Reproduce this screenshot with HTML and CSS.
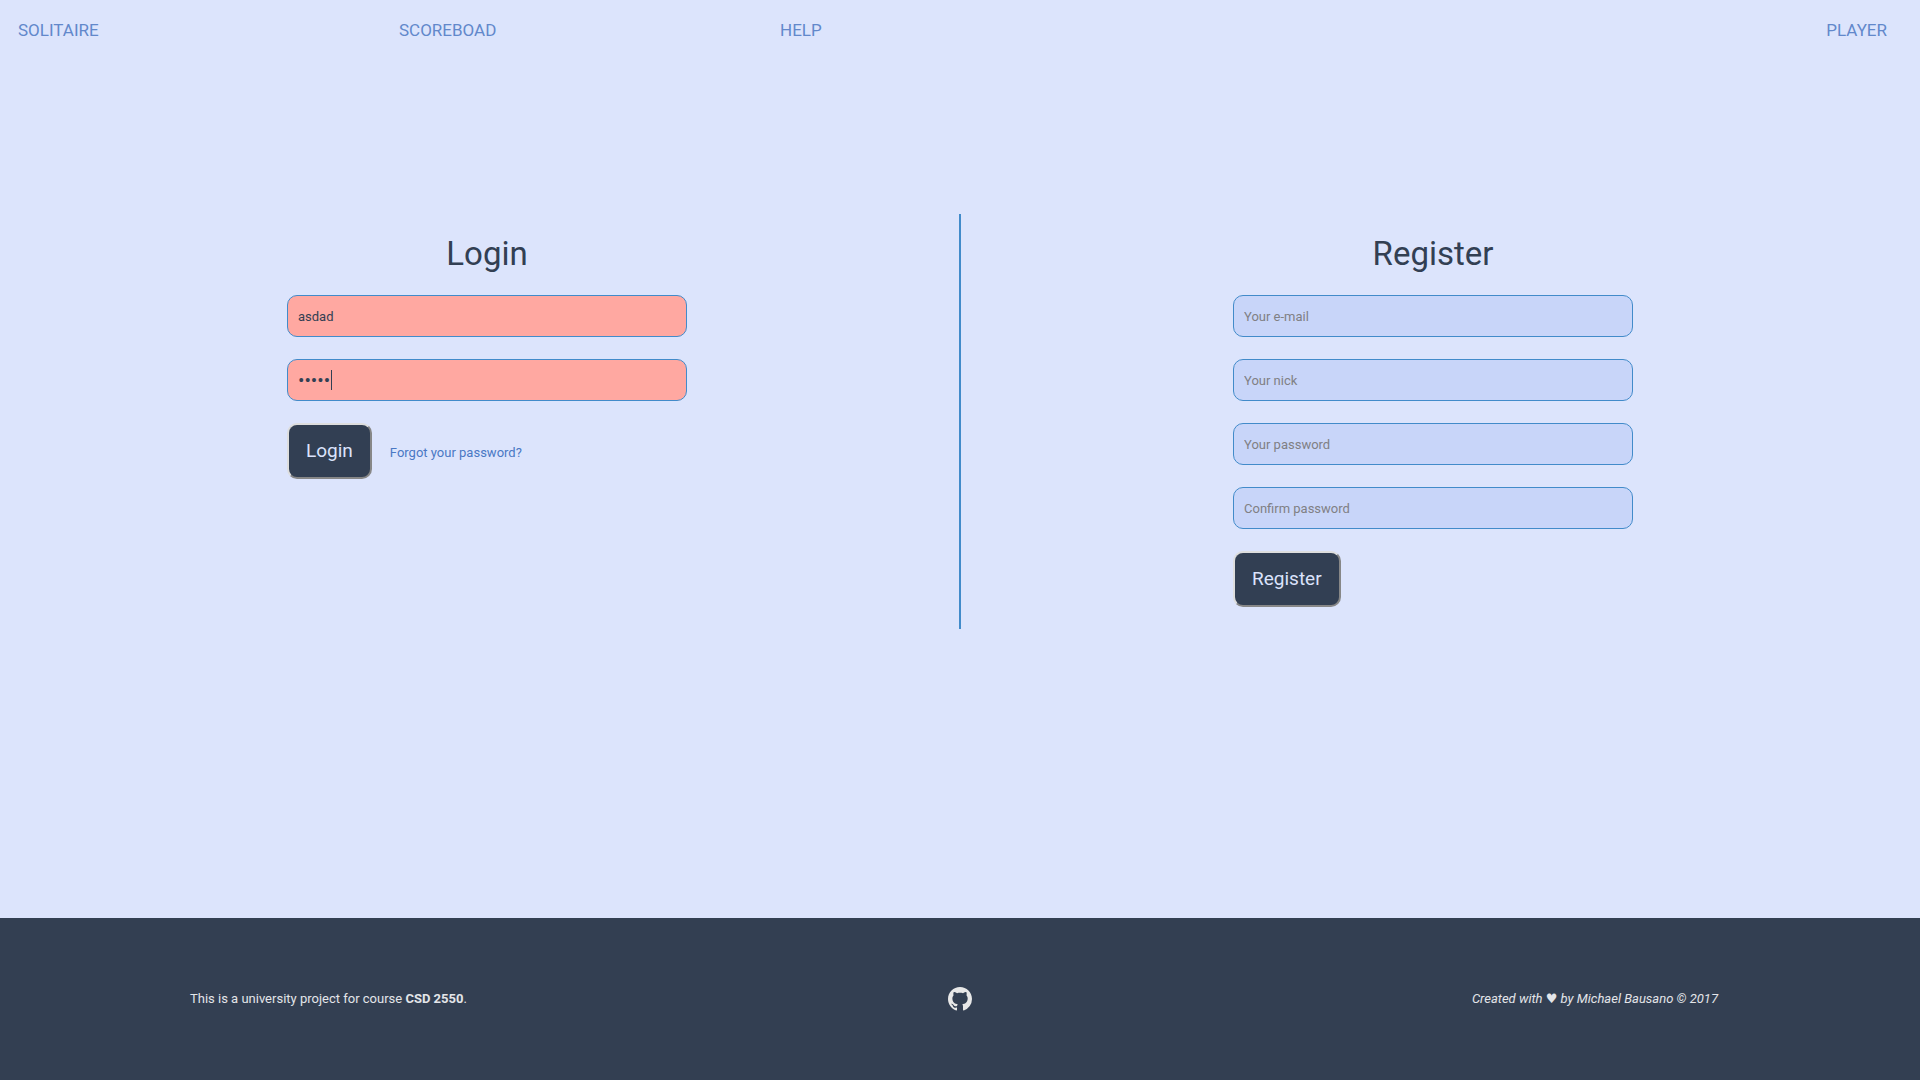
FILE: index.html
```html
<!DOCTYPE html>
<html lang="en">
<head>
<meta charset="utf-8">
<meta name="viewport" content="width=device-width, initial-scale=1">
<title>Solitaire</title>
<link rel="stylesheet" href="styles.css">
</head>
<body>
<nav class="nav">
  <a class="nav-link" href="#">SOLITAIRE</a>
  <a class="nav-link" href="#">SCOREBOAD</a>
  <a class="nav-link" href="#">HELP</a>
  <a class="nav-link nav-player" href="#">PLAYER</a>
</nav>
<main class="main">
  <form class="form">
    <h1 class="title">Login</h1>
    <input class="field invalid" type="text" aria-label="Your nick" value="asdad">
    <div class="secret">
      <input class="field invalid masked" type="password" aria-label="Your password" value="asdad">
      <span class="caret"></span>
    </div>
    <div class="actions">
      <button class="button" type="button">Login</button>
      <a class="forgot" href="#">Forgot your password?</a>
    </div>
  </form>
  <div class="divider"></div>
  <form class="form">
    <h1 class="title">Register</h1>
    <input class="field" type="email" aria-label="Your e-mail" placeholder="Your e-mail">
    <input class="field" type="text" aria-label="Your nick" placeholder="Your nick">
    <input class="field" type="password" aria-label="Your password" placeholder="Your password">
    <input class="field" type="password" aria-label="Confirm password" placeholder="Confirm password">
    <div class="actions">
      <button class="button" type="button">Register</button>
    </div>
  </form>
</main>
<footer class="footer">
  <p class="note">This is a university project for course <b>CSD 2550</b>.</p>
  <a class="github" href="#" aria-label="GitHub"><svg viewBox="0 0 16 16" width="24" height="24"><path fill="currentColor" d="M8 0C3.58 0 0 3.58 0 8c0 3.54 2.29 6.53 5.47 7.59.4.07.55-.17.55-.38 0-.19-.01-.82-.01-1.49-2.01.37-2.53-.49-2.69-.94-.09-.23-.48-.94-.82-1.13-.28-.15-.68-.52-.01-.53.63-.01 1.08.58 1.23.82.72 1.21 1.87.87 2.33.66.07-.52.28-.87.51-1.07-1.78-.2-3.64-.89-3.64-3.95 0-.87.31-1.59.82-2.15-.08-.2-.36-1.02.08-2.12 0 0 .67-.21 2.2.82.64-.18 1.32-.27 2-.27s1.36.09 2 .27c1.53-1.04 2.2-.82 2.2-.82.44 1.1.16 1.92.08 2.12.51.56.82 1.27.82 2.15 0 3.07-1.87 3.75-3.65 3.95.29.25.54.73.54 1.48 0 1.07-.01 1.93-.01 2.2 0 .21.15.46.55.38A8.01 8.01 0 0 0 16 8c0-4.42-3.58-8-8-8z"/></svg></a>
  <p class="note credit">Created with ♥ by Michael Bausano © 2017</p>
</footer>
</body>
</html>
```
FILE: styles.css
```css
* { box-sizing: border-box; }

body {
  margin: 0;
  min-height: 100vh;
  display: flex;
  flex-direction: column;
  background: #dce4fc;
  color: #323f53;
  font: 13px/20px Roboto, "DejaVu Sans", sans-serif;
}

a { text-decoration: none; }

.nav {
  display: flex;
  padding: 20px 15px 20px 0;
  font-size: 17px;
}

.nav-link {
  flex: 0 0 20%;
  padding: 0 18px;
  color: #6288cb;
}

.nav-player {
  margin-left: auto;
  text-align: right;
}

.main {
  flex: 1;
  display: grid;
  grid-template-columns: 1fr 2px 1fr;
  align-items: start;
  padding: 154px 15px 80px;
}

.divider {
  height: 415px;
  background: #428bca;
}

.form {
  width: 400px;
  max-width: 100%;
  margin: 0 auto;
  padding-top: 16px;
  display: flex;
  flex-direction: column;
  gap: 22px;
}

.title {
  margin: 0 0 -5px;
  font-size: 33px;
  line-height: 48px;
  font-weight: 400;
  text-align: center;
}

.field {
  display: block;
  width: 100%;
  height: 42px;
  padding: 0 10px;
  border: 1px solid #428bca;
  border-radius: 10px;
  background: #c8d5f9;
  color: #323f53;
  font: inherit;
  outline: none;
}

.field::placeholder { color: #808084; opacity: 1; }

.invalid { background: #ffa8a1; }

.masked { font-size: 19px; }

.secret { position: relative; }

.caret {
  position: absolute;
  left: 44px;
  top: 11px;
  width: 1px;
  height: 20px;
  background: #323f53;
}

.actions {
  display: flex;
  align-items: baseline;
  gap: 18px;
}

.button {
  height: 56px;
  padding: 0 17px;
  border: 2px solid;
  border-color: #dedede #878787 #878787 #dedede;
  border-radius: 10px;
  background: #323f53;
  color: #dbe3fc;
  font: 400 19px/28px Roboto, sans-serif;
}

.forgot { color: #4a78c4; }

.footer {
  display: grid;
  grid-template-columns: 1fr auto 1fr;
  align-items: center;
  min-height: 162px;
  padding: 0 190px;
  background: #333f52;
  color: #e3e5e9;
}

.note { margin: 0; }

.credit {
  padding-right: 12px;
  text-align: right;
  font-style: italic;
}

.github { display: flex; color: #e8e8e8; }
```
